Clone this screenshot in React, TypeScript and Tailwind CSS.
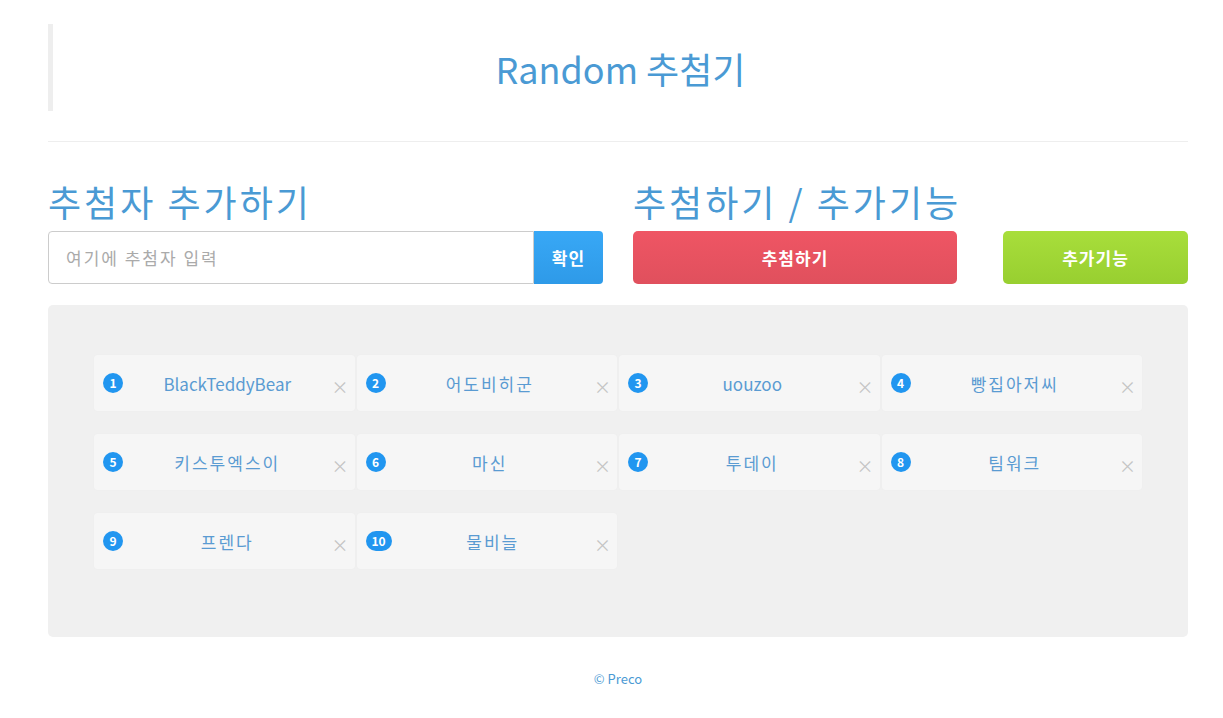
import React from 'react';

const FONT = { fontFamily: '"Noto Sans CJK KR", "Noto Sans", sans-serif' };

const people = [
  'BlackTeddyBear',
  '어도비히군',
  'uouzoo',
  '빵집아저씨',
  '키스투엑스이',
  '마신',
  '투데이',
  '팀워크',
  '프렌다',
  '물비늘',
];

const isHangul = (s: string) => /[가-힣]/.test(s);

function PersonCard({ no, name }: { no: number; name: string }) {
  return (
    <div className="relative flex h-[56px] items-center rounded-[3px] bg-[#f6f6f6] px-[9px] shadow-[0_0_1px_rgba(0,0,0,0.06)]">
      <span
        className={`flex h-[20px] items-center justify-center rounded-full bg-[#2196f0] text-[12px] font-bold leading-none text-white ${
          no > 9 ? 'min-w-[26px] px-[5px]' : 'w-[20px]'
        }`}
      >
        {no}
      </span>
      <span
        className={`flex-1 text-center text-[17px] leading-none text-[#5a9bd2] ${
          isHangul(name) ? 'tracking-[2px]' : ''
        }`}
      >
        {name}
      </span>
      <span className="mt-[6px] w-[14px] text-center text-[17px] leading-none text-[#c4c4c4]">×</span>
    </div>
  );
}

export default function App() {
  return (
    <div className="min-h-[718px] bg-white" style={FONT}>
      <div className="ml-[48px] w-[1140px]">
        {/* header */}
        <div className="mt-[24px] flex h-[87px] items-center justify-center border-l-[5px] border-[#eeeeee]">
          <h1 className="text-[36px] font-normal leading-none text-[#4a9ad4]">Random 추첨기</h1>
        </div>
        <div className="mt-[30px] border-t border-[#eeeeee]" />

        {/* controls */}
        <div className="mt-[38px] grid grid-cols-2 gap-[30px]">
          <div>
            <h2 className="text-[36px] font-normal leading-[42px] tracking-[3px] text-[#4a9ad4]">추첨자 추가하기</h2>
            <div className="mt-[9px] flex h-[53px]">
              <input
                className="h-full flex-1 rounded-l-[4px] border border-[#cccccc] px-[17px] text-[17px] tracking-[2px] text-[#555] outline-none placeholder:text-[#aaaaaa]"
                placeholder="여기에 추첨자 입력"
                style={FONT}
              />
              <button className="h-full w-[69px] rounded-r-[4px] bg-gradient-to-b from-[#38a8f6] to-[#2e9ae8] text-[17px] font-bold tracking-[1px] text-white">
                확인
              </button>
            </div>
          </div>
          <div>
            <h2 className="text-[36px] font-normal leading-[42px] tracking-[3px] text-[#4a9ad4]">추첨하기 / 추가기능</h2>
            <div className="mt-[9px] flex h-[53px] justify-between">
              <button className="h-full w-[324px] rounded-[5px] bg-gradient-to-b from-[#ef5564] to-[#e0505d] text-[17px] font-semibold tracking-[1px] text-white">
                추첨하기
              </button>
              <button className="h-full w-[185px] rounded-[5px] bg-gradient-to-b from-[#a8de3b] to-[#98cf30] text-[17px] font-semibold tracking-[1px] text-white">
                추가기능
              </button>
            </div>
          </div>
        </div>

        {/* list */}
        <div className="mt-[21px] h-[332px] rounded-[5px] bg-[#f0f0f0] px-[46px] pt-[50px]">
          <div className="grid grid-cols-4 gap-x-[2px] gap-y-[23px]">
            {people.map((p, i) => (
              <PersonCard key={i} no={i + 1} name={p} />
            ))}
          </div>
        </div>

        <p className="mt-[33px] text-center text-[13px] leading-[18px] text-[#4a9ad4]">© Preco</p>
      </div>
    </div>
  );
}
